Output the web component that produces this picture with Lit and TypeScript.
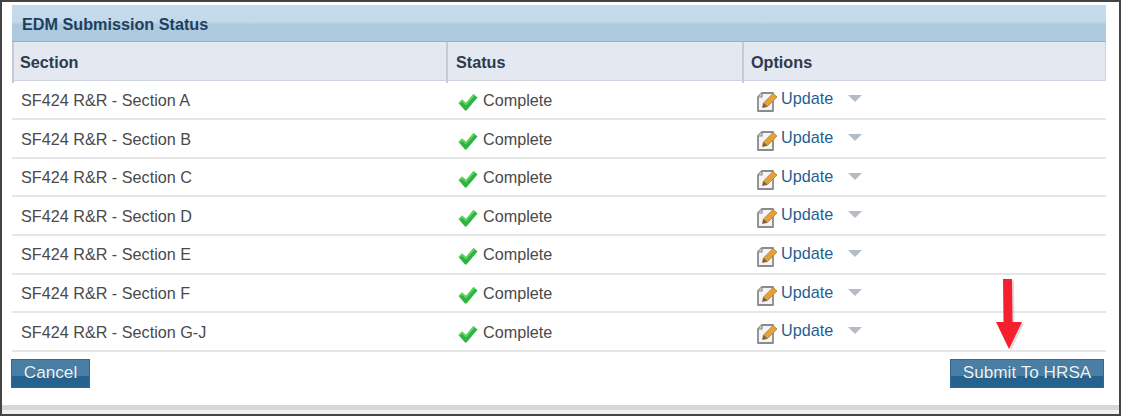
import { LitElement, html, css, svg } from "lit";
import { customElement } from "lit/decorators.js";

const rows = ["A", "B", "C", "D", "E", "F", "G-J"];

const check = svg`<svg class="check" width="20" height="18" viewBox="0 0 20 18"><path d="M0.5 10 L4 6.5 L8 10 L15.5 1 L19.5 4.5 L8.5 17.5 L7 17.5 Z" fill="#2fb344"/><path d="M0.5 10 L4 6.5 L8 10 L15.5 1 L17 2.2 L8 12.5 L4 8.8 L1.6 11 Z" fill="#5fd65f"/></svg>`;

const edit = svg`<svg class="edit" width="22" height="23" viewBox="0 0 22 23"><path d="M6 3 H17 V21 H2 V7 Z" fill="#f4f4f2" stroke="#8b8b8d" stroke-width="1.8" stroke-linejoin="round"/><path d="M6 3 V7 H2" fill="#d2d2d2" stroke="#8b8b8d" stroke-width="1.2"/><path d="M6.5 17.5 L7.5 13 L17 3.5 L21 7 L11.5 16.5 Z" fill="#e5a138" stroke="#b08030" stroke-width=".8"/><path d="M6.5 17.5 L7.5 13 L11.5 16.5 Z" fill="#6b6355"/></svg>`;

@customElement("app-root")
export class AppRoot extends LitElement {
  static styles = css`
    :host {
      display: block;
      width: 1121px;
      height: 416px;
      font-family: "Liberation Sans", Arial, sans-serif;
      background: #fff;
    }
    .frame {
      position: relative;
      box-sizing: border-box;
      width: 1121px;
      height: 416px;
      border: 2px solid #444;
      padding: 3px 13px 0 9px;
      display: flex;
      flex-direction: column;
      background: #fff;
    }
    .title {
      height: 37px;
      box-sizing: border-box;
      background: linear-gradient(#c4d9ea 0, #c4d9ea 46%, #aecadf 54%, #aecadf 100%);
      color: #1d3f5f;
      font-weight: bold;
      font-size: 16.2px;
      line-height: 38px;
      padding-left: 10px;
      margin-left: 1px;
      border-bottom: 1px solid #9db2c4;
    }
    .head,
    .row {
      display: grid;
      grid-template-columns: 434px 296px 1fr;
      margin-left: 1px;
    }
    .head {
      height: 39.33px;
      box-sizing: border-box;
      background: #e4e8f1;
      border-bottom: 1px solid #ccd3de;
      border-right: 1px solid #ccd3de;
      color: #2c3b4d;
      font-weight: bold;
      font-size: 16.2px;
      line-height: 41px;
    }
    .head > div {
      padding-left: 6px;
      border-left: 2px solid #c6cbd4;
    }
    .head > div:nth-child(2) {
      padding-left: 8px;
    }
    .head > div:nth-child(3) {
      padding-left: 7px;
    }
    .row {
      height: 38.67px;
      box-sizing: border-box;
      padding-top: 1.4px;
      border-bottom: 2px solid #e6e6e6;
      color: #4a4a4a;
      font-size: 16.2px;
      align-items: center;
    }
    .row > div {
      display: flex;
      align-items: center;
    }
    .sec {
      padding-left: 9px;
    }
    .stat {
      padding-left: 12px;
      gap: 5px;
    }
    .check {
      margin-top: 3px;
    }
    .opt {
      padding-left: 14px;
    }
    .edit {
      margin-top: 3px;
      margin-right: 3px;
    }
    .link {
      color: #1f5f92;
      margin-top: -3px;
    }
    .caret {
      width: 0;
      height: 0;
      border-left: 7px solid transparent;
      border-right: 7px solid transparent;
      border-top: 7px solid #b4bcc6;
      margin: -3px 0 0 15px;
    }
    .actions {
      display: flex;
      justify-content: space-between;
      padding: 7px 2px 0 0;
    }
    .btn {
      height: 29px;
      box-sizing: border-box;
      border: 1px solid #2f6a94;
      background: linear-gradient(#4a7fa5 0, #4a7fa5 58%, #26628e 58%, #26628e 100%);
      color: #f0f6fa;
      font-family: inherit;
      font-size: 17.2px;
      padding: 0 0 2px;
      text-shadow: 0 0 1px #1d4a6d;
    }
    .btn.cancel {
      width: 79px;
    }
    .btn.submit {
      width: 154px;
    }
    .spacer {
      flex: 1;
    }
    .foot {
      height: 9px;
      margin: 0 -13px 0 -9px;
      background: linear-gradient(#d4d8da 0, #d4d8da 4.5px, #eef0f2 4.5px);
    }
    .arrow {
      position: absolute;
      left: 990px;
      top: 277px;
    }
  `;

  render() {
    return html`<div class="frame">
      <div class="title">EDM Submission Status</div>
      <div class="head">
        <div>Section</div>
        <div>Status</div>
        <div>Options</div>
      </div>
      ${rows.map(
        (r) => html`<div class="row">
          <div class="sec">SF424 R&amp;R - Section ${r}</div>
          <div class="stat">${check}<span>Complete</span></div>
          <div class="opt">${edit}<span class="link">Update</span><span class="caret"></span></div>
        </div>`
      )}
      <div class="actions">
        <button class="btn cancel">Cancel</button>
        <button class="btn submit">Submit To HRSA</button>
      </div>
      <div class="spacer"></div>
      <div class="foot"></div>
      <svg class="arrow" width="36" height="76" viewBox="0 0 36 76">
        <path d="M11 0 H20 L20.5 43 H30 L17 70 L4 43 H11.5 Z" fill="#000" opacity=".14" transform="translate(2 1.5)"/>
        <path d="M11 0 H20 L20.5 43 H30 L17 70 L4 43 H11.5 Z" fill="#f5202e"/>
      </svg>
    </div>`;
  }
}
